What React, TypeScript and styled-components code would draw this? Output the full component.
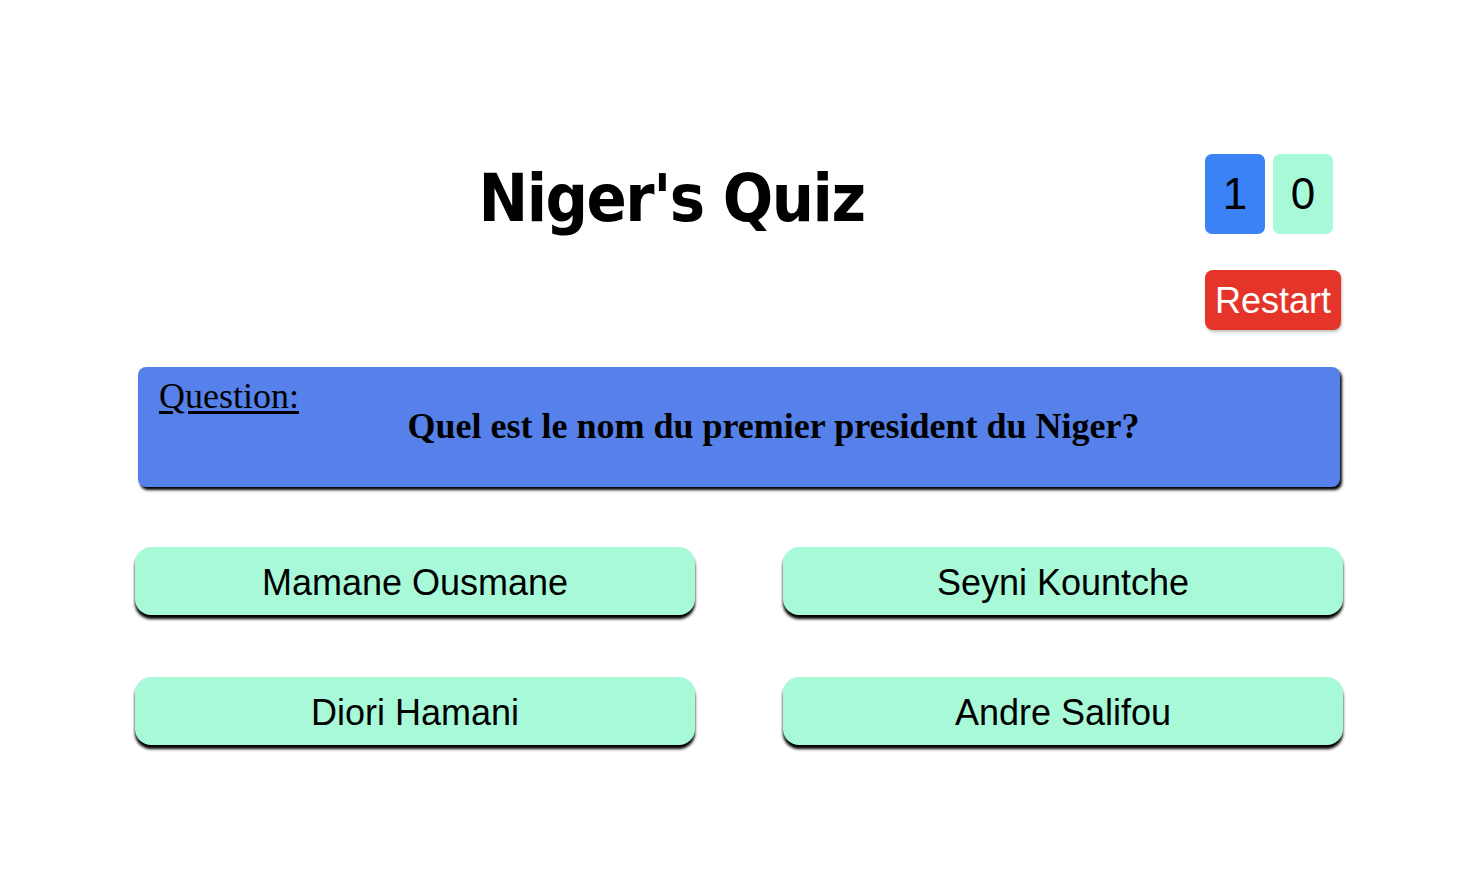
import React from "react";
import styled, { createGlobalStyle } from "styled-components";

const Global = createGlobalStyle`
  html, body { margin: 0; padding: 0; background: #ffffff; }
  body { font-family: "Liberation Sans", Arial, sans-serif; color: #000; }
`;

const Page = styled.main`
  width: 1208px;
  margin: 0 0 0 135px;
  padding: 154px 0 80px 0;
  display: flex;
  flex-direction: column;
`;

const Header = styled.header`
  display: flex;
  align-items: flex-start;
  padding: 0 2px 0 3px;
`;

const Title = styled.h1`
  flex: 1;
  margin: 5px 0 0 0;
  text-align: center;
  font-family: "DejaVu Sans Condensed", "DejaVu Sans", sans-serif;
  font-weight: 700;
  font-size: 66px;
  line-height: 80px;
  letter-spacing: -1.5px;
`;

const Side = styled.div`
  width: 136px;
  display: flex;
  flex-direction: column;
  align-items: flex-start;
`;

const Scores = styled.div`
  display: flex;
  gap: 8px;
`;

const ScoreBox = styled.div<{ $tone: "blue" | "green" }>`
  width: 60px;
  height: 80px;
  border-radius: 7px;
  display: flex;
  align-items: center;
  justify-content: center;
  font-size: 44px;
  background: ${(p) => (p.$tone === "blue" ? "#3b82f6" : "#a7f9d8")};
`;

const RestartButton = styled.button`
  margin-top: 36px;
  width: 136px;
  height: 60px;
  border: none;
  border-radius: 8px;
  background: #e5352a;
  color: #fff;
  font-family: "Liberation Sans", Arial, sans-serif;
  font-size: 36px;
  padding: 2px 0 0 0;
  cursor: pointer;
  box-shadow: 1px 2px 3px rgba(0, 0, 0, 0.25);
`;

const QuestionCard = styled.section`
  margin: 37px 3px 0 3px;
  height: 120px;
  box-sizing: border-box;
  padding: 14px 20px 0 21px;
  background: #5681ea;
  border-radius: 8px;
  box-shadow: 2px 3px 3px #000;
  font-family: "Liberation Serif", "Times New Roman", serif;
`;

const QuestionLabel = styled.div`
  font-size: 36px;
  line-height: 30px;
  text-decoration: underline;
  text-underline-offset: 3px;
`;

const QuestionText = styled.div`
  font-size: 36px;
  font-weight: 700;
  line-height: 30px;
  text-align: center;
  padding-left: 68px;
`;

const Answers = styled.div`
  margin-top: 60px;
  display: grid;
  grid-template-columns: 560px 560px;
  column-gap: 88px;
  row-gap: 62px;
`;

const AnswerButton = styled.button`
  height: 68px;
  border: none;
  border-radius: 16px;
  background: #a7f9d8;
  color: #000;
  font-family: "Liberation Sans", Arial, sans-serif;
  font-size: 36px;
  padding: 4px 0 0 0;
  cursor: pointer;
  box-shadow: 0 4px 3px #000;
`;

const answers = ["Mamane Ousmane", "Seyni Kountche", "Diori Hamani", "Andre Salifou"];

export default function App() {
  return (
    <>
      <Global />
      <Page>
        <Header>
          <Title>Niger's Quiz</Title>
          <Side>
            <Scores>
              <ScoreBox $tone="blue">1</ScoreBox>
              <ScoreBox $tone="green">0</ScoreBox>
            </Scores>
            <RestartButton>Restart</RestartButton>
          </Side>
        </Header>
        <QuestionCard>
          <QuestionLabel>Question:</QuestionLabel>
          <QuestionText>Quel est le nom du premier president du Niger?</QuestionText>
        </QuestionCard>
        <Answers>
          {answers.map((a) => (
            <AnswerButton key={a}>{a}</AnswerButton>
          ))}
        </Answers>
      </Page>
    </>
  );
}
